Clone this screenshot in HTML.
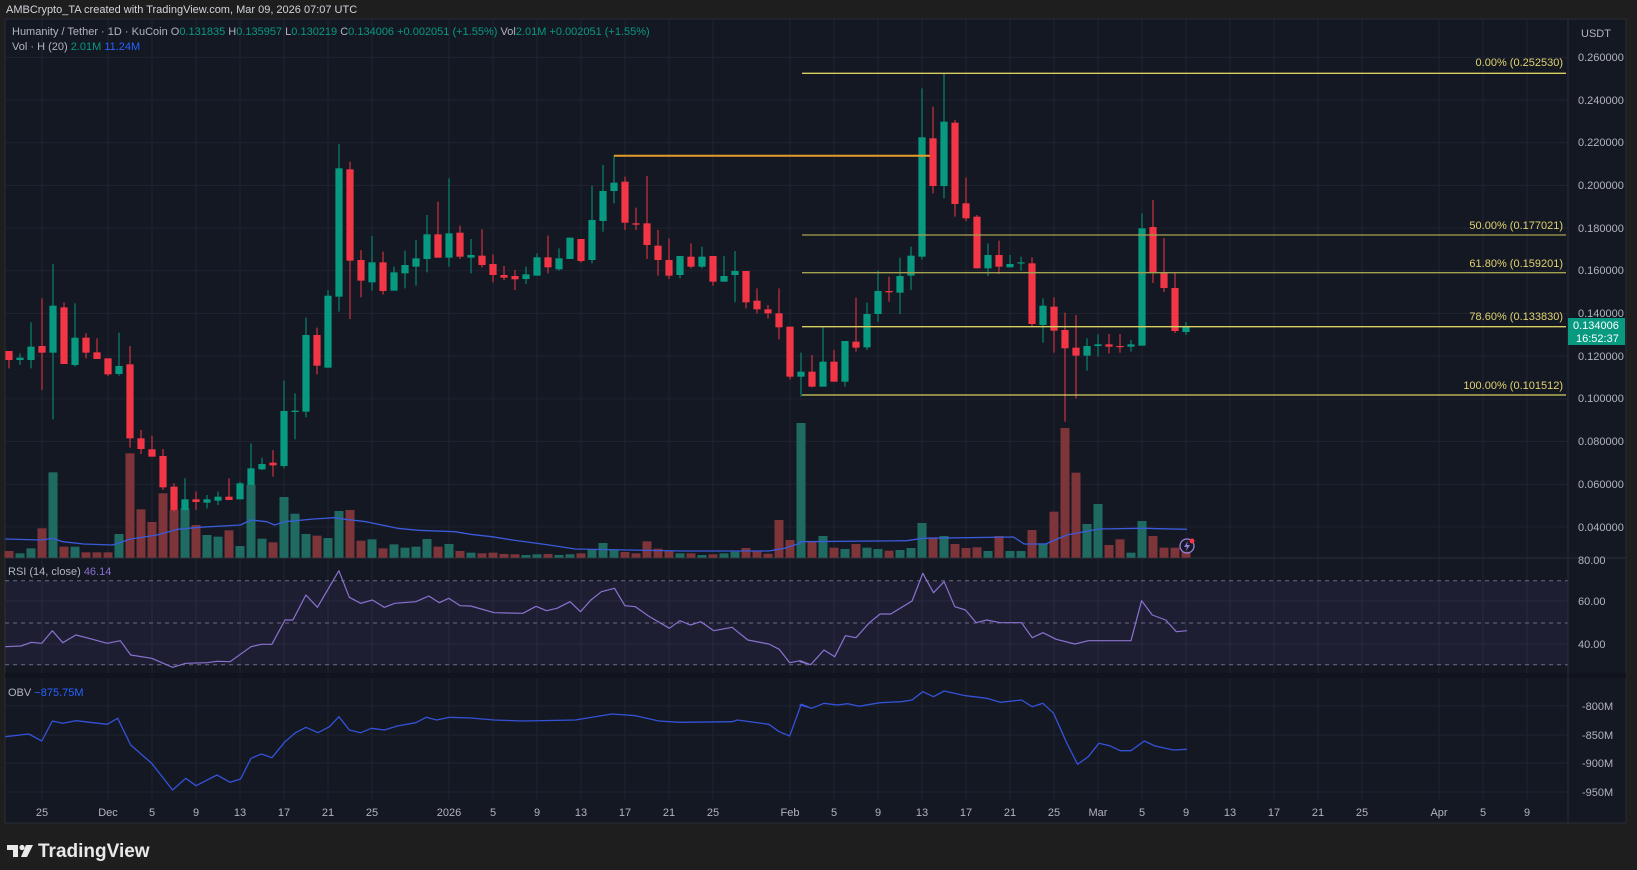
<!DOCTYPE html>
<html><head><meta charset="utf-8"><style>
html,body{margin:0;padding:0;background:#1e1e1f;width:1637px;height:870px;overflow:hidden}
svg{display:block}
text{font-family:"Liberation Sans",sans-serif}
</style></head><body>
<svg id="s" width="1637" height="870" viewBox="0 0 1637 870" xmlns="http://www.w3.org/2000/svg">
<rect x="0" y="0" width="1637" height="870" fill="#1e1e1f"/>
<rect x="5" y="19" width="1621" height="804" fill="#141823" stroke="#2a2d35" stroke-width="1"/>
<g id="grid"></g>
<rect x="5" y="581" width="1563" height="84" fill="#7e57c2" fill-opacity="0.1"/>
<line x1="5" y1="558" x2="1626" y2="558" stroke="#2a2e39" stroke-width="1"/>
<rect x="5" y="673" width="1621" height="5" fill="#11141c"/>
<line x1="1568" y1="19" x2="1568" y2="823" stroke="#2a2e39" stroke-width="1"/>
<g id="vol"></g>
<g id="cand"></g>
<g id="lines"></g>
<!-- fib lines -->
<g stroke-width="1.3">
<line x1="802" y1="73.3" x2="1566" y2="73.3" stroke="#d8cf5f"/>
<line x1="802" y1="235" x2="1566" y2="235" stroke="#a3a24e"/>
<line x1="802" y1="272.7" x2="1566" y2="272.7" stroke="#a3a24e"/>
<line x1="802" y1="326.7" x2="1566" y2="326.7" stroke="#d8cf5f"/>
<line x1="802" y1="395" x2="1566" y2="395" stroke="#d8cf5f"/>
<line x1="614" y1="155.7" x2="930" y2="155.7" stroke="#e59c2a" stroke-width="2"/>
</g>
<g fill="#e1d370" font-size="11" text-anchor="end">
<text x="1563" y="66">0.00% (0.252530)</text>
<text x="1563" y="229">50.00% (0.177021)</text>
<text x="1563" y="267">61.80% (0.159201)</text>
<text x="1563" y="320">78.60% (0.133830)</text>
<text x="1563" y="389">100.00% (0.101512)</text>
</g>
<!-- price axis -->
<g fill="#b2b5be" font-size="11">
<text x="1581" y="37">USDT</text>
<text x="1578" y="61">0.260000</text>
<text x="1578" y="104">0.240000</text>
<text x="1578" y="146">0.220000</text>
<text x="1578" y="189">0.200000</text>
<text x="1578" y="232">0.180000</text>
<text x="1578" y="274">0.160000</text>
<text x="1578" y="317">0.140000</text>
<text x="1578" y="360">0.120000</text>
<text x="1578" y="402">0.100000</text>
<text x="1578" y="445">0.080000</text>
<text x="1578" y="488">0.060000</text>
<text x="1578" y="531">0.040000</text>
<text x="1578" y="564">80.00</text>
<text x="1578" y="605">60.00</text>
<text x="1578" y="648">40.00</text>
<text x="1582" y="710">-800M</text>
<text x="1582" y="739">-850M</text>
<text x="1582" y="767">-900M</text>
<text x="1582" y="796">-950M</text>
</g>
<rect x="1568" y="318" width="57" height="27" fill="#089981"/>
<g fill="#ffffff" font-size="11"><text x="1573" y="329">0.134006</text><text x="1576" y="342">16:52:37</text></g>
<!-- date axis -->
<g fill="#b2b5be" font-size="11" text-anchor="middle">
<text x="42" y="816">25</text><text x="108" y="816">Dec</text><text x="152" y="816">5</text><text x="196" y="816">9</text>
<text x="240" y="816">13</text><text x="284" y="816">17</text><text x="328" y="816">21</text><text x="372" y="816">25</text>
<text x="449" y="816">2026</text><text x="493" y="816">5</text><text x="537" y="816">9</text><text x="581" y="816">13</text>
<text x="625" y="816">17</text><text x="669" y="816">21</text><text x="713" y="816">25</text><text x="790" y="816">Feb</text>
<text x="834" y="816">5</text><text x="878" y="816">9</text><text x="922" y="816">13</text><text x="966" y="816">17</text>
<text x="1010" y="816">21</text><text x="1054" y="816">25</text><text x="1098" y="816">Mar</text><text x="1142" y="816">5</text>
<text x="1186" y="816">9</text><text x="1230" y="816">13</text><text x="1274" y="816">17</text><text x="1318" y="816">21</text>
<text x="1362" y="816">25</text><text x="1439" y="816">Apr</text><text x="1483" y="816">5</text><text x="1527" y="816">9</text>
</g>
<!-- legends -->
<text x="6" y="13" fill="#d1d4dc" font-size="11">AMBCrypto_TA created with TradingView.com, Mar 09, 2026 07:07 UTC</text>
<text x="12" y="35" font-size="11" fill="#b2b5be">Humanity / Tether · 1D · KuCoin  O<tspan fill="#089981">0.131835</tspan>  H<tspan fill="#089981">0.135957</tspan>  L<tspan fill="#089981">0.130219</tspan>  C<tspan fill="#089981">0.134006  +0.002051 (+1.55%)</tspan>  Vol<tspan fill="#089981">2.01M  +0.002051 (+1.55%)</tspan></text>
<text x="12" y="50" font-size="11" fill="#b2b5be">Vol · H (20)  <tspan fill="#089981">2.01M</tspan>  <tspan fill="#2962ff">11.24M</tspan></text>
<text x="8" y="575" font-size="11" fill="#b2b5be">RSI (14, close)  <tspan fill="#8c6fd0">46.14</tspan></text>
<text x="8" y="696" font-size="11" fill="#b2b5be">OBV  <tspan fill="#2962ff">−875.75M</tspan></text>
<!-- lightning icon -->
<circle cx="1187" cy="546" r="7" fill="none" stroke="#9b7fe0" stroke-width="1.3"/>
<path d="M1188 541 L1184 547 L1187 547 L1186 551 L1190 545 L1187 545 Z" fill="#9b7fe0"/>
<circle cx="1192" cy="541" r="2.5" fill="#f23645"/>
<!-- logo -->
<g fill="#e9e9ea">
<path d="M7 845 h11 v12 h-5 v-7 h-6 z"/>
<circle cx="22" cy="847.5" r="2.6"/>
<path d="M26 845 h7 l-6 12 h-6 z"/>
<text x="38" y="857" font-size="19" font-weight="bold" fill="#e9e9ea">TradingView</text>
</g>
</svg>
<script>
(function(){
var NS="http://www.w3.org/2000/svg";
function el(p,t,a){var e=document.createElementNS(NS,t);for(var k in a)e.setAttribute(k,a[k]);p.appendChild(e);return e;}
var g=document.getElementById('grid');
var gc="#1f2330";
var days=[3,9,13,17,21,25,29,33,40,44,48,52,56,60,64,71,75,79,83,87,91,95,99,103,107,111,115,119,123,130,134,138];
days.forEach(function(d){var x=9+11*d;el(g,'line',{x1:x,y1:19,x2:x,y2:800,stroke:gc,'stroke-width':1});});
for(var k=0;k<12;k++){var y=57.4+k*42.68;el(g,'line',{x1:5,y1:y,x2:1568,y2:y,stroke:gc});}
[601,644,706,735,763,792].forEach(function(y){el(g,'line',{x1:5,y1:y,x2:1568,y2:y,stroke:gc});});
[580.7,623,664.7].forEach(function(y){el(g,'line',{x1:5,y1:y,x2:1568,y2:y,stroke:'#6f6a80','stroke-dasharray':'4,4','stroke-width':1});});
// candles: [green, bodyTop, bodyBot, wickTop, wickBot] zy units y=60+zy/3
var C=[[0,873,900,873,925],[1,893,900,880,915],[1,860,900,787,925],[0,858,878,715,990],[1,737,878,612,1078],[0,742,912,727,912],[1,833,915,730,920],[0,833,878,820,895],[0,877,897,835,897],[0,895,943,895,948],
[1,918,942,818,947],[0,913,1135,858,1163],[0,1135,1167,1110,1182],[0,1168,1190,1127,1190],[0,1188,1282,1167,1290],[0,1280,1350,1270,1355],[1,1318,1350,1255,1352],[0,1318,1326,1295,1350],[1,1318,1328,1305,1345],[1,1310,1322,1295,1335],
[0,1310,1320,1255,1320],[1,1270,1318,1265,1318],[1,1225,1275,1150,1275],[1,1212,1228,1193,1230],[0,1208,1216,1170,1250],[1,1053,1218,962,1225],[1,1052,1056,1000,1138],[1,825,1055,773,1072],[0,825,917,803,943],[1,707,923,690,923],
[1,325,710,252,755],[0,328,602,305,777],[0,600,662,570,712],[1,607,667,528,692],[0,607,693,575,703],[1,637,692,620,692],[1,615,640,572,685],[1,595,620,540,677],[1,523,597,465,637],[0,523,593,425,593],
[1,520,593,355,620],[0,518,590,497,597],[1,585,593,537,640],[0,587,615,508,622],[0,612,645,583,667],[0,645,653,618,660],[0,648,658,630,690],[1,643,657,620,672],[1,592,647,580,647],[0,592,622,527,640],
[1,595,628,565,632],[1,533,597,533,597],[0,537,603,537,608],[1,480,600,377,610],[1,393,483,315,515],[1,368,393,287,430],[0,365,488,350,510],[0,490,494,443,510],[0,490,555,348,597],[0,557,600,510,647],
[0,600,647,535,657],[1,588,645,588,655],[0,590,620,550,625],[1,590,620,560,625],[0,588,665,588,677],[1,648,665,588,665],[1,633,645,573,727],[0,633,727,633,745],[0,722,748,685,760],[0,748,760,735,775],
[0,760,802,685,838],[0,800,950,800,958],[1,935,950,878,1010],[0,935,980,885,982],[1,905,980,800,980],[0,905,965,870,965],[1,843,965,843,980],[0,845,863,713,875],[1,762,862,728,870],[1,693,762,632,785],
[0,693,697,650,725],[1,648,698,593,762],[1,587,647,560,690],[1,232,590,85,598],[0,235,378,140,400],[1,185,378,40,415],[0,188,432,180,470],[0,430,475,353,483],[0,470,625,465,625],[1,585,625,550,648],
[0,585,620,542,642],[1,612,622,585,622],[1,607,610,590,632],[0,610,792,592,800],[1,737,795,715,848],[0,740,812,712,878],[0,810,865,758,1085],[0,863,887,765,1015],[1,858,887,835,932],[1,853,858,823,890],
[0,853,860,822,880],[0,858,861,822,878],[1,853,860,840,875],[1,505,857,460,857],[0,501,639,420,669],[0,639,684,534,696],[0,684,813,639,819],[1,798,816,786,825]];
// volumes: [green, topZy] y=440+zy/3
var V=[[0,333],[1,340],[1,325],[0,265],[1,97],[0,320],[1,320],[0,337],[0,337],[0,337],[1,282],[0,40],[0,208],[0,246],[0,160],[0,210],[1,205],[0,255],[1,285],[1,290],
[0,271],[1,318],[1,135],[1,296],[0,307],[1,171],[1,221],[1,282],[0,287],[1,294],[1,213],[0,210],[0,302],[1,298],[0,325],[1,313],[1,323],[1,320],[1,297],[0,320],
[1,312],[0,333],[1,338],[0,340],[0,338],[0,342],[0,343],[1,345],[1,343],[0,342],[1,345],[1,343],[0,340],[1,330],[1,309],[1,328],[0,336],[0,340],[0,304],[0,326],
[0,332],[1,340],[0,340],[1,345],[0,343],[1,340],[1,335],[0,324],[0,333],[0,341],[0,240],[0,300],[1,-51],[0,305],[1,288],[0,323],[1,327],[0,312],[1,323],[1,327],
[0,332],[1,330],[1,324],[1,249],[0,292],[1,288],[0,312],[0,324],[0,322],[1,333],[0,288],[1,333],[1,333],[0,270],[1,310],[0,215],[0,-36],[0,98],[1,252],[1,192],
[0,315],[0,298],[1,338],[1,243],[0,288],[0,323],[0,323],[0,335]];
var vg=document.getElementById('vol');
V.forEach(function(v,i){var x=9+11*i;var t=440+v[1]/3;el(vg,'rect',{x:x-4.5,y:t,width:9,height:557.7-t,fill:v[0]?'#1f6b61':'#7e3539'});});
var cg=document.getElementById('cand');
C.forEach(function(c,i){var x=9+11*i;var col=c[0]?'#089981':'#f23645';
var y=function(z){return 60+z/3;};
el(cg,'line',{x1:x,y1:y(c[3]),x2:x,y2:y(c[4]),stroke:col,'stroke-width':1});
var h=Math.max(1.2,y(c[2])-y(c[1]));el(cg,'rect',{x:x-3.6,y:y(c[1]),width:7.2,height:h,fill:col});});
var lg=document.getElementById('lines');
function pl(pts,col,w){el(lg,'polyline',{points:pts.map(function(p){return p[0].toFixed(1)+','+p[1].toFixed(1);}).join(' '),fill:'none',stroke:col,'stroke-width':w,'stroke-linejoin':'round'});}
function z8(a){return a.map(function(p){return [820*p[0]/1568,440+p[1]/3];});}
function z9(a){return a.map(function(p){return [800+837*p[0]/1568,440+p[1]/3];});}
var ma8=[[10,297],[80,300],[100,295],[120,305],[160,312],[215,315],[250,297],[300,285],[340,268],[380,262],[460,255],[480,240],[510,245],[525,255],[545,245],[600,237],[640,233],[660,238],[700,245],[760,265],[800,271],[870,275],[900,283],[940,290],[980,300],[1050,315],[1100,327],[1200,330],[1300,333],[1470,333],[1500,325],[1530,310]];
var ma9=[[0,305],[200,302],[230,295],[400,291],[420,312],[460,312],[500,285],[560,267],[640,265],[725,268]];
pl(z8(ma8).concat(z9(ma9)),'#3b5bdb',1.3);
var r8=[[10,620],[40,618],[60,607],[80,610],[100,572],[120,608],[145,585],[170,595],[205,610],[230,602],[250,645],[290,655],[330,682],[355,670],[395,668],[415,664],[440,665],[480,620],[500,613],[520,613],[545,540],[560,540],[585,465],[607,502],[648,392],[668,472],[690,490],[712,480],[735,502],[755,490],[795,485],[820,468],[840,488],[858,475],[880,497],[900,498],[945,518],[1000,520],[1025,499],[1045,512],[1065,505],[1090,485],[1110,515],[1130,480],[1150,455],[1175,445],[1195,497],[1215,500],[1240,528],[1280,565],[1300,542],[1320,555],[1340,545],[1365,572],[1400,562],[1430,600],[1470,612],[1490,628],[1510,668],[1530,662],[1550,674]];
var r9=[[0,665],[20,674],[45,630],[65,650],[85,587],[105,593],[130,548],[150,522],[170,522],[210,483],[230,400],[250,458],[270,425],[290,500],[310,510],[330,548],[350,540],[375,548],[415,548],[435,593],[455,578],[480,598],[515,612],[540,602],[580,602],[620,602],[640,482],[660,525],[685,540],[705,575],[725,572]];
pl(z8(r8).concat(z9(r9)),'#8a72cf',1.2);
var o8=[[10,890],[55,882],[80,903],[100,843],[120,850],[145,842],[205,853],[225,835],[250,915],[290,970],[330,1050],[355,1015],[375,1037],[415,1005],[440,1027],[460,1017],[480,955],[500,942],[520,953],[545,905],[565,878],[585,862],[608,878],[630,860],[648,830],[668,870],[690,878],[710,865],[735,870],[760,858],[795,848],[815,832],[835,840],[860,832],[900,834],[945,840],[1000,843],[1100,840],[1170,822],[1215,827],[1260,843],[1300,847],[1400,845],[1410,840],[1470,853],[1490,875],[1510,888],[1532,793],[1545,800]];
var o9=[[0,795],[22,805],[45,790],[70,795],[90,791],[110,799],[150,788],[190,785],[210,780],[230,755],[250,770],[270,753],[310,767],[350,775],[375,787],[415,780],[435,800],[455,790],[475,820],[500,910],[520,973],[540,950],[560,910],[580,917],[600,932],[620,932],[645,903],[665,918],[700,930],[725,928]];
pl(z8(o8).concat(z9(o9)),'#3452d8',1.3);
})();
</script>
</body></html>
